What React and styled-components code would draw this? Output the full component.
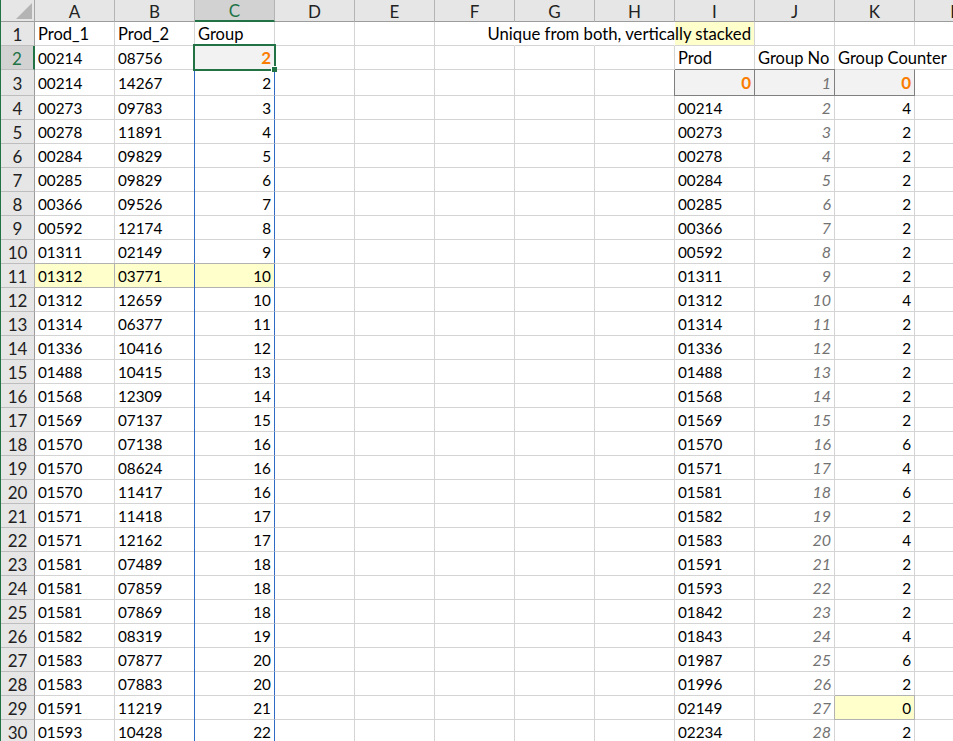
import React from 'react';
import styled, { createGlobalStyle, css } from 'styled-components';

const COLS = ['A', 'B', 'C', 'D', 'E', 'F', 'G', 'H', 'I', 'J', 'K', 'L'];

// rows 2..30: Prod_1, Prod_2, Group
const LEFT = [
    ['00214', '08756', 2], ['00214', '14267', 2], ['00273', '09783', 3], ['00278', '11891', 4],
    ['00284', '09829', 5], ['00285', '09829', 6], ['00366', '09526', 7], ['00592', '12174', 8],
    ['01311', '02149', 9], ['01312', '03771', 10], ['01312', '12659', 10], ['01314', '06377', 11],
    ['01336', '10416', 12], ['01488', '10415', 13], ['01568', '12309', 14], ['01569', '07137', 15],
    ['01570', '07138', 16], ['01570', '08624', 16], ['01570', '11417', 16], ['01571', '11418', 17],
    ['01571', '12162', 17], ['01581', '07489', 18], ['01581', '07859', 18], ['01581', '07869', 18],
    ['01582', '08319', 19], ['01583', '07877', 20], ['01583', '07883', 20], ['01591', '11219', 21],
    ['01593', '10428', 22],
];

// rows 4..30: Prod, Group Counter (Group No just counts up from 2)
const RIGHT = [
    ['00214', 4], ['00273', 2], ['00278', 2], ['00284', 2], ['00285', 2], ['00366', 2], ['00592', 2],
    ['01311', 2], ['01312', 4], ['01314', 2], ['01336', 2], ['01488', 2], ['01568', 2], ['01569', 2],
    ['01570', 6], ['01571', 4], ['01581', 6], ['01582', 2], ['01583', 4], ['01591', 2], ['01593', 2],
    ['01842', 2], ['01843', 4], ['01987', 6], ['01996', 2], ['02149', 0], ['02234', 2],
];

const GlobalStyle = createGlobalStyle`
    html, body {
        margin: 0;
        height: 100%;
        background: #fff;
        overflow: hidden;
    }
`;

const Sheet = styled.div`
    display: grid;
    grid-template-columns: 34px repeat(12, 80px);
    grid-template-rows: 22px 24px 24px 26px repeat(27, 24px);
    width: 953px;
    height: 741px;
    overflow: hidden;
    box-sizing: border-box;
    border-left: 1px solid #217346;
    font-family: Lato, "Open Sans", sans-serif;
    font-size: 15.3px;
    color: #000;
`;

const Corner = styled.div`
    background: #e6e6e6;
    border-right: 1px solid #a6a6a6;
    border-bottom: 1px solid #9c9c9c;
    box-sizing: border-box;
    display: flex;
    align-items: flex-end;
    justify-content: flex-end;
    padding: 0 2px 2px 0;
    svg { display: block; }
`;

const ColHead = styled.div`
    display: flex;
    align-items: center;
    justify-content: center;
    box-sizing: border-box;
    padding-top: 1px;
    font-size: 17px;
    color: #222;
    background: ${p => (p.$active ? '#d2d2d2' : '#e6e6e6')};
    border-right: 1px solid #b4b4b4;
    border-bottom: ${p => (p.$active ? '2px solid #217346' : '1px solid #9c9c9c')};
    ${p => p.$active && css`color: #217346;`}
`;

const RowHead = styled.div`
    display: flex;
    align-items: center;
    justify-content: center;
    box-sizing: border-box;
    padding-top: 1px;
    font-size: 17px;
    color: #222;
    background: ${p => (p.$active ? '#d2d2d2' : '#e6e6e6')};
    border-right: ${p => (p.$active ? '2px solid #217346' : '1px solid #9c9c9c')};
    border-bottom: 1px solid #bdbdbd;
    ${p => p.$active && css`color: #217346;`}
`;

const Cell = styled.div`
    position: relative;
    display: flex;
    align-items: center;
    justify-content: ${p => (p.$right ? 'flex-end' : 'flex-start')};
    box-sizing: border-box;
    padding: 0 3px 0 3px;
    white-space: nowrap;
    background: #fff;
    border-right: 1px solid ${p => (p.$noRight ? 'transparent' : '#d4d4d4')};
    border-bottom: 1px solid #d4d4d4;
    ${p => p.$label && css`
        font-size: 16.5px;
    `}
    ${p => p.$spill && css`
        z-index: 1;
        background: transparent;
    `}
    ${p => p.$tone === 'note' && css`
        background: #ffffcc;
        border-right-color: #b2b2b2;
        border-bottom-color: #b2b2b2;
        box-shadow: 0 -1px 0 #b2b2b2, -1px 0 0 #b2b2b2;
    `}
    ${p => p.$tone === 'headnote' && css`
        background: #ffffcc;
    `}
    ${p => p.$tone === 'calc' && css`
        background: #f2f2f2;
        border-right-color: #7f7f7f;
        border-bottom-color: #7f7f7f;
        box-shadow: 0 -1px 0 #7f7f7f, -1px 0 0 #7f7f7f;
    `}
    ${p => p.$blue && css`
        border-right-color: #2f6bc4;
        box-shadow: ${p.$tone === 'note' ? '0 -1px 0 #b2b2b2, ' : ''}-1px 0 0 #2f6bc4;
    `}
    ${p => p.$muted && css`
        color: #737373;
        font-style: italic;
        font-size: 16px;
    `}
    ${p => p.$orange && css`
        color: #fa7d00;
        font-weight: 700;
        font-size: 17px;
    `}
`;

const Overflowing = styled.span`
    position: absolute;
    right: 3px;
    top: 50%;
    font-size: 16.7px;
    transform: translateY(-50%);
`;

const ActiveCell = styled(Cell)`
    background: #f2f2f2;
    z-index: 2;
`;

const Selection = styled.div`
    position: absolute;
    inset: -2px -2px -2px -2px;
    border: 2px solid #217346;
    pointer-events: none;
`;

const FillHandle = styled.div`
    position: absolute;
    right: -3px;
    bottom: -3px;
    width: 5px;
    height: 5px;
    background: #217346;
    border: 1px solid #fff;
    border-width: 1px 0 0 1px;
`;

const Row = ({ num, cells }) => (
    <>
        <RowHead $active={num === 2}>{num}</RowHead>
        {cells}
    </>
);

function buildCells(r) {
    const left = LEFT[r - 2];
    const right = r >= 4 ? RIGHT[r - 4] : null;
    const note = r === 11;
    const out = [];

    out.push(<Cell key="a" $tone={note ? 'note' : undefined}>{left[0]}</Cell>);
    out.push(<Cell key="b" $tone={note ? 'note' : undefined}>{left[1]}</Cell>);
    if (r === 2) {
        out.push(
            <ActiveCell key="c" $right $orange>
                {left[2]}
                <Selection />
                <FillHandle />
            </ActiveCell>
        );
    } else {
        out.push(<Cell key="c" $right $blue $tone={note ? 'note' : undefined}>{left[2]}</Cell>);
    }
    ['d', 'e', 'f', 'g', 'h'].forEach(k => out.push(<Cell key={k} />));

    if (r === 2) {
        out.push(<Cell key="i" $label>Prod</Cell>);
        out.push(<Cell key="j" $label>Group No</Cell>);
        out.push(<Cell key="k" $label $spill $noRight>Group Counter</Cell>);
    } else if (r === 3) {
        out.push(<Cell key="i" $right $orange $tone="calc">0</Cell>);
        out.push(<Cell key="j" $right $muted $tone="calc">1</Cell>);
        out.push(<Cell key="k" $right $orange $tone="calc">0</Cell>);
    } else {
        out.push(<Cell key="i">{right[0]}</Cell>);
        out.push(<Cell key="j" $right $muted>{r - 2}</Cell>);
        out.push(<Cell key="k" $right $tone={r === 29 ? 'note' : undefined}>{right[1]}</Cell>);
    }
    out.push(<Cell key="l" />);
    return out;
}

export default function App() {
    const rows = [];
    for (let r = 2; r <= 30; r++) {
        rows.push(<Row key={r} num={r} cells={buildCells(r)} />);
    }
    return (
        <>
            <GlobalStyle />
            <Sheet>
                <Corner>
                    <svg width="16" height="16" viewBox="0 0 16 16">
                        <polygon points="16,0 16,16 0,16" fill="#b4b4b4" />
                    </svg>
                </Corner>
                {COLS.map(c => <ColHead key={c} $active={c === 'C'}>{c}</ColHead>)}

                <RowHead>1</RowHead>
                <Cell $label>Prod_1</Cell>
                <Cell $label>Prod_2</Cell>
                <Cell $label>Group</Cell>
                <Cell />
                <Cell />
                <Cell $noRight />
                <Cell $noRight />
                <Cell $noRight />
                <Cell $tone="headnote"><Overflowing>Unique from both, vertically stacked</Overflowing></Cell>
                <Cell />
                <Cell />
                <Cell />

                {rows}
            </Sheet>
        </>
    );
}
